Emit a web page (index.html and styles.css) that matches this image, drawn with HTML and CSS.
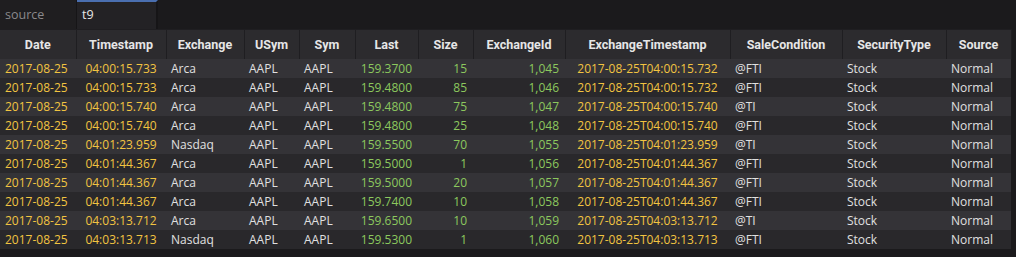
FILE: index.html
```html
<!DOCTYPE html>
<html>
<head>
<meta charset="utf-8">
<link rel="stylesheet" href="styles.css">
</head>
<body>
<div class="panel">
  <div class="tabs">
    <div class="tab">source</div>
    <div class="tab active">t9</div>
  </div>
  <table class="grid">
    <colgroup>
      <col class="w76"><col class="w90"><col class="w78"><col class="w55"><col class="w56"><col class="w63"><col class="w55"><col class="w92"><col class="w165"><col class="w112"><col class="w104"><col class="w65">
    </colgroup>
    <thead>
      <tr><th>Date</th><th>Timestamp</th><th>Exchange</th><th>USym</th><th>Sym</th><th>Last</th><th>Size</th><th>ExchangeId</th><th>ExchangeTimestamp</th><th>SaleCondition</th><th>SecurityType</th><th>Source</th></tr>
    </thead>
    <tbody>
      <tr><td class="y">2017-08-25</td><td class="y c">04:00:15.733</td><td>Arca</td><td>AAPL</td><td>AAPL</td><td class="g r">159.3700</td><td class="g r">15</td><td class="g r">1,045</td><td class="y c">2017-08-25T04:00:15.732</td><td>@FTI</td><td>Stock</td><td>Normal</td></tr>
      <tr><td class="y">2017-08-25</td><td class="y c">04:00:15.733</td><td>Arca</td><td>AAPL</td><td>AAPL</td><td class="g r">159.4800</td><td class="g r">85</td><td class="g r">1,046</td><td class="y c">2017-08-25T04:00:15.732</td><td>@FTI</td><td>Stock</td><td>Normal</td></tr>
      <tr><td class="y">2017-08-25</td><td class="y c">04:00:15.740</td><td>Arca</td><td>AAPL</td><td>AAPL</td><td class="g r">159.4800</td><td class="g r">75</td><td class="g r">1,047</td><td class="y c">2017-08-25T04:00:15.740</td><td>@TI</td><td>Stock</td><td>Normal</td></tr>
      <tr><td class="y">2017-08-25</td><td class="y c">04:00:15.740</td><td>Arca</td><td>AAPL</td><td>AAPL</td><td class="g r">159.4800</td><td class="g r">25</td><td class="g r">1,048</td><td class="y c">2017-08-25T04:00:15.740</td><td>@FTI</td><td>Stock</td><td>Normal</td></tr>
      <tr><td class="y">2017-08-25</td><td class="y c">04:01:23.959</td><td>Nasdaq</td><td>AAPL</td><td>AAPL</td><td class="g r">159.5500</td><td class="g r">70</td><td class="g r">1,055</td><td class="y c">2017-08-25T04:01:23.959</td><td>@TI</td><td>Stock</td><td>Normal</td></tr>
      <tr><td class="y">2017-08-25</td><td class="y c">04:01:44.367</td><td>Arca</td><td>AAPL</td><td>AAPL</td><td class="g r">159.5000</td><td class="g r">1</td><td class="g r">1,056</td><td class="y c">2017-08-25T04:01:44.367</td><td>@FTI</td><td>Stock</td><td>Normal</td></tr>
      <tr><td class="y">2017-08-25</td><td class="y c">04:01:44.367</td><td>Arca</td><td>AAPL</td><td>AAPL</td><td class="g r">159.5000</td><td class="g r">20</td><td class="g r">1,057</td><td class="y c">2017-08-25T04:01:44.367</td><td>@FTI</td><td>Stock</td><td>Normal</td></tr>
      <tr><td class="y">2017-08-25</td><td class="y c">04:01:44.367</td><td>Arca</td><td>AAPL</td><td>AAPL</td><td class="g r">159.7400</td><td class="g r">10</td><td class="g r">1,058</td><td class="y c">2017-08-25T04:01:44.367</td><td>@FTI</td><td>Stock</td><td>Normal</td></tr>
      <tr><td class="y">2017-08-25</td><td class="y c">04:03:13.712</td><td>Arca</td><td>AAPL</td><td>AAPL</td><td class="g r">159.6500</td><td class="g r">10</td><td class="g r">1,059</td><td class="y c">2017-08-25T04:03:13.712</td><td>@TI</td><td>Stock</td><td>Normal</td></tr>
      <tr><td class="y">2017-08-25</td><td class="y c">04:03:13.713</td><td>Nasdaq</td><td>AAPL</td><td>AAPL</td><td class="g r">159.5300</td><td class="g r">1</td><td class="g r">1,060</td><td class="y c">2017-08-25T04:03:13.713</td><td>@FTI</td><td>Stock</td><td>Normal</td></tr>
    </tbody>
  </table>
</div>
</body>
</html>
```
FILE: styles.css
```css
html, body {
  margin: 0;
  padding: 0;
  background: #1b1a1c;
  width: 1016px;
  height: 257px;
  overflow: hidden;
}
.panel {
  font-family: "Open Sans", "Noto Sans", sans-serif;
  font-size: 12px;
  color: #dcdcdc;
}
.tabs {
  display: flex;
  height: 29px;
  background: #1b1a1c;
}
.tab {
  width: 77px;
  box-sizing: border-box;
  padding: 6px 0 0 5px;
  color: #8a898c;
  font-size: 12.5px;
  background: #1f1e20;
  border-right: 1px solid #161517;
}
.tab.active {
  width: 81px;
  color: #e6e6e6;
  background: #232225;
  border-top: 2px solid #4a6fb0;
  padding-top: 4px;
  border-right: 2px solid #161517;
}
.grid {
  border-collapse: collapse;
  table-layout: fixed;
  width: 1011px;
}
.w76 { width: 76px; }
.w90 { width: 90px; }
.w78 { width: 78px; }
.w55 { width: 55px; }
.w56 { width: 56px; }
.w63 { width: 63px; }
.w92 { width: 92px; }
.w165 { width: 165px; }
.w112 { width: 112px; }
.w104 { width: 104px; }
.w65 { width: 65px; }
.grid th {
  height: 29px;
  padding: 0;
  background: #2c2b2e;
  color: #e6e6e6;
  font-family: Roboto, "Open Sans", sans-serif;
  font-size: 12.5px;
  font-weight: 700;
  text-align: center;
  border-right: 1px solid #1f1e21;
  border-top: 1px solid #1f1e21;
  box-sizing: border-box;
}
.grid td {
  height: 19px;
  padding: 0 5px;
  white-space: nowrap;
  overflow: hidden;
  box-sizing: border-box;
  color: #e0e0e0;
  font-weight: 500;
}
.grid tbody tr:nth-child(odd) td { background: #343337; }
.grid tbody tr:nth-child(even) td { background: #29282b; }
.grid td.y { color: #f2c441; }
.grid td.g { color: #8cc85e; }
.grid td.r { text-align: right; padding-right: 6px; }
.grid td.c { text-align: center; padding: 0; }
```
